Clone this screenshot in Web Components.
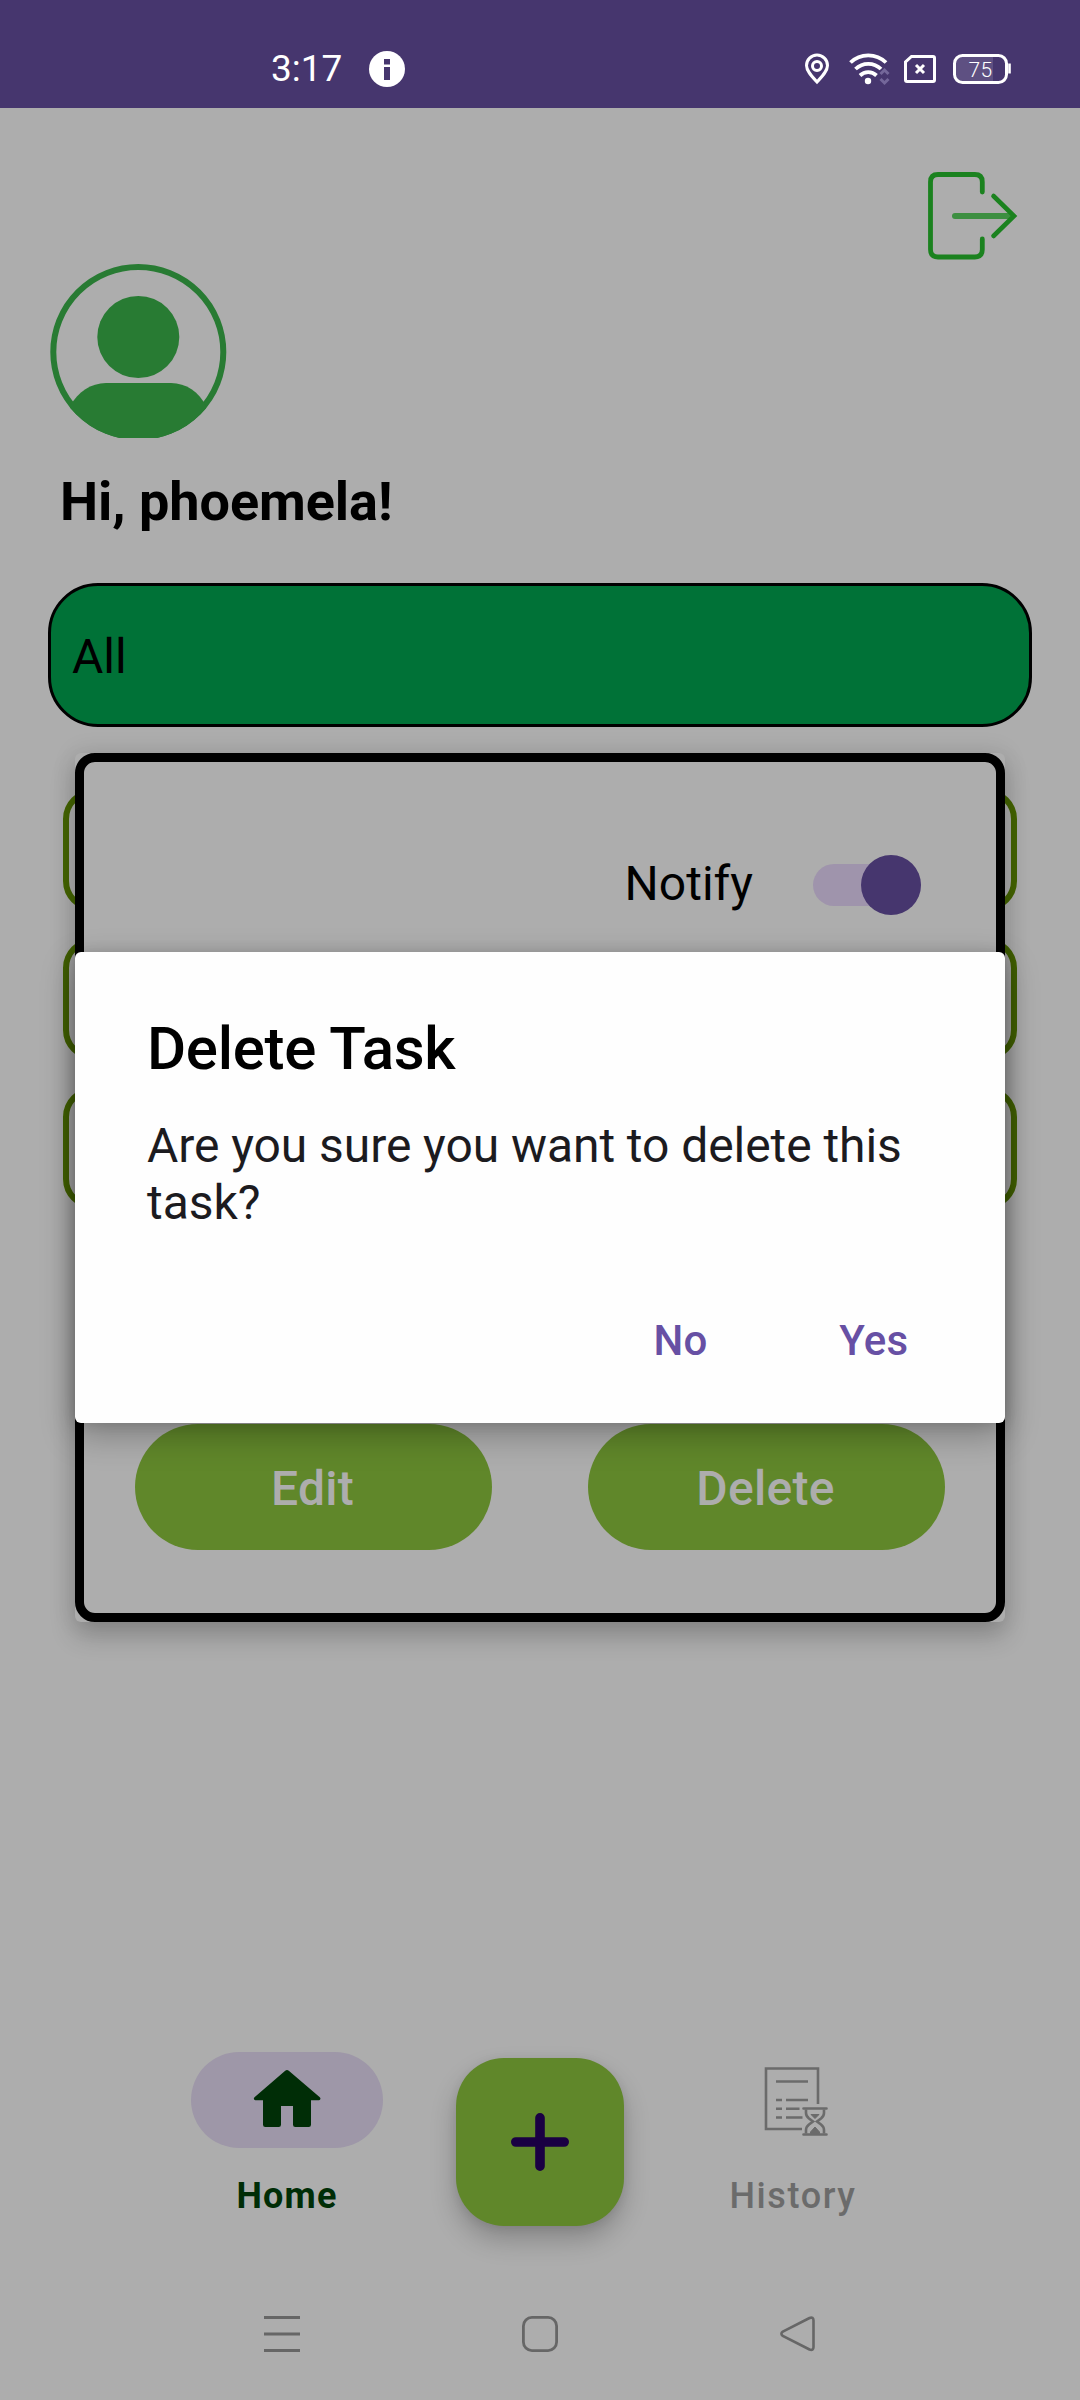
<!DOCTYPE html>
<html lang="en">
<head>
<meta charset="utf-8">
<title>Tasks</title>
<style>
html,body{margin:0;padding:0;background:#adadad}
body{font-family:Roboto,"Noto Sans",sans-serif;color:#000;width:1080px;height:2400px;overflow:hidden}
</style>
</head>
<body>
<app-screen>
  <status-bar slot="status" time="3:17" battery="75"></status-bar>
  <profile-header>Hi, phoemela!</profile-header>
  <filter-select>All</filter-select>
  <task-list><task-item></task-item><task-item></task-item><task-item></task-item></task-list>
  <bottom-nav slot="bottom"></bottom-nav>
  <system-nav slot="bottom"></system-nav>
  <task-card slot="overlay"></task-card>
  <alert-dialog slot="overlay" heading="Delete Task" no="No" yes="Yes">Are you sure you want to delete this task?</alert-dialog>
</app-screen>
<script>
const define = (name, html) => customElements.define(name, class extends HTMLElement {
  constructor() {
    super();
    const a = k => this.getAttribute(k) || '';
    this.attachShadow({mode: 'open'}).innerHTML =
      '<style>:host{display:block;box-sizing:border-box}svg{display:block}*{box-sizing:border-box}</style>' + html(a);
  }
});

define('app-screen', () => `
<style>:host{position:relative;width:1080px;height:2400px;overflow:hidden;background:#adadad;display:flex;flex-direction:column}
main{flex:1;display:flex;flex-direction:column}</style>
<slot name="status"></slot><main><slot></slot></main><slot name="bottom"></slot><slot name="overlay"></slot>`);

define('status-bar', a => `
<style>:host{height:108px;background:#46366e;color:#fff;display:flex;justify-content:space-between;align-items:flex-start;padding:51px 69px 0 271px}
.l,.r{display:flex;align-items:center;height:36px}
.t{font-size:37px;line-height:36px;width:98px;white-space:nowrap}</style>
<div class="l"><span class="t">${a('time')}</span>
<svg width="36" height="36" viewBox="0 0 36 36"><circle cx="18" cy="18" r="18" fill="#fff"/><path d="M15 8h6v5.500h-6zM15 16h6v13h-6z" fill="#46366e"/></svg></div>
<div class="r">
<svg width="206" height="36" viewBox="805 51 206 36" fill="none" stroke="#fff">
<path d="M817 82C812 76.500 806.500 71 806.500 65.500a10.500 10.500 0 0 1 21 0C827.500 71 822 76.500 817 82z" stroke-width="3"/><circle cx="817" cy="66" r="4.500" stroke-width="3"/>
<path d="M850.500 62.500a25.500 25.500 0 0 1 35.500 0M855.500 69a18.200 18.200 0 0 1 25.500 0M860 75.500a12 12 0 0 1 16.500 0" stroke-width="3.800"/>
<circle cx="868" cy="81" r="3.200" fill="#fff" stroke="none"/>
<path d="M880.500 74l4-4 4 4M880.500 79l4 4 4-4" stroke="#74679a" stroke-width="3"/>
<path d="M905.500 62v18q0 1.500 1.500 1.500h26q1.500 0 1.500-1.500V58q0-1.500-1.500-1.500h-21.500z" stroke-width="3"/>
<path d="M916 65l8 8M924 65l-8 8" stroke-width="3"/>
<path d="M961 57h32v24h-32q-5 0-5-5v-14q0-5 5-5z" fill="#5e5082" stroke="none"/>
<rect x="954.500" y="55.500" width="52" height="27" rx="8" stroke-width="3"/>
<path d="M1009.500 63.500v10" stroke-width="2.600"/>
<text x="968.500" y="76.500" font-size="21" font-weight="300" letter-spacing=".3" fill="#fff" stroke="none" font-family="Roboto,sans-serif">${a('battery')}</text>
</svg></div>`);

define('profile-header', () => `
<style>.out{display:flex;justify-content:flex-end;height:156px;padding:61px 62px 0 0}
.av{margin-left:50px}h1{margin:32px 0 0 60px;font-size:54px;line-height:64px;font-weight:700;letter-spacing:-.05px;white-space:nowrap}</style>
<div class="out"><svg width="92" height="92" viewBox="926 169 92 92" fill="none" stroke="#1b821f" stroke-linecap="round">
<path d="M982.300 192V182q0-7.500-7.500-7.500H938q-7.500 0-7.500 7.500v67.500q0 7.500 7.500 7.500h36.800q7.500 0 7.500-7.500V239" stroke-width="4.800"/>
<path d="M955 216h56" stroke="#3d8f41" stroke-width="6"/><path d="M993.500 196l20.500 20-20.500 20" stroke-width="4.600"/></svg></div>
<svg class="av" width="177" height="174" viewBox="0 0 177 174"><defs><clipPath id="c"><circle cx="88.300" cy="88" r="88"/></clipPath></defs>
<circle cx="88.300" cy="88" r="85" fill="none" stroke="#287b33" stroke-width="6"/><circle cx="88.300" cy="73" r="41" fill="#287b33"/>
<path clip-path="url(#c)" fill="#287b33" d="M56 119h65C136 119 149 128 156 142L156 180H20V142C28 128 41 119 56 119z"/></svg>
<h1><slot></slot></h1>`);

define('filter-select', () => `
<style>:host{margin:49px 48px 0;height:144px;border:3px solid #000;border-radius:50px;background:#007237;padding:0 21px;font-size:48px;line-height:142px}</style><slot></slot>`);

define('task-list', () => `
<style>:host{display:flex;flex-direction:column;gap:27px;padding:62px 63px 0}</style><slot></slot>`);
define('task-item', () => `
<style>:host{height:122px;border:6px solid #446400;border-radius:30px}</style>`);

define('task-card', () => `
<style>:host{position:absolute;left:75px;top:753px;width:930px;height:869px;border-radius:6px;background:#adadad;box-shadow:0 14px 26px rgba(0,0,0,.2),0 0 24px rgba(0,0,0,.1)}
.in{height:100%;border:9px solid #000;border-radius:20px;display:flex;flex-direction:column;justify-content:space-between;padding:93px 51px 63px}
.n{display:flex;justify-content:flex-end;align-items:center;gap:60px;padding-right:24px;height:60px;font-size:48px}
.n span{padding-bottom:4px}
.b{display:flex;justify-content:space-between}</style>
<div class="in"><div class="n"><span>Notify</span><toggle-switch></toggle-switch></div>
<div class="b"><pill-button>Edit</pill-button><pill-button>Delete</pill-button></div></div>`);

define('toggle-switch', () => `
<style>:host{width:108px;height:60px;display:flex;align-items:center}
.t{width:108px;height:42px;border-radius:21px;background:#9f94ac;display:flex;align-items:center;justify-content:flex-end}
.k{width:60px;height:60px;flex:none;border-radius:50%;background:#46366e}</style><div class="t"><div class="k"></div></div>`);

define('pill-button', () => `
<style>:host{width:357px;height:126px;padding-top:2px;border-radius:63px;background:#60872a;color:#adadad;font-size:48px;font-weight:500;letter-spacing:.3px;display:flex;align-items:center;justify-content:center}
span{margin-right:2px}</style><span><slot></slot></span>`);

define('alert-dialog', a => `
<style>:host{position:absolute;left:75px;top:952px;width:930px;height:471px;border-radius:6px;background:#fefefe;padding:62px 72px 0;box-shadow:0 12px 34px rgba(0,0,0,.28),0 0 14px rgba(0,0,0,.12)}
h2{margin:0;font-size:60px;line-height:70px;font-weight:500;letter-spacing:-.3px}
p{margin:33px 0 0;font-size:48px;line-height:57px;letter-spacing:-.07px;color:#1c1b1f}
.b{display:flex;justify-content:flex-end;color:#6750a4;font-size:42px;line-height:50px;font-weight:500;letter-spacing:.3px;margin-top:85px;gap:131.500px;padding-right:24.500px}</style>
<h2>${a('heading')}</h2><p><slot></slot></p><div class="b"><span>${a('no')}</span><span>${a('yes')}</span></div>`);

define('nav-item', a => `
<style>:host{display:flex;flex-direction:column;align-items:center;flex:1;font-size:36px;line-height:42px;color:#6b6b6b;font-weight:500;letter-spacing:1.6px}
:host([active]){color:#002d06;font-weight:700;letter-spacing:1.200px}
.p{width:192px;height:96px;border-radius:48px;display:flex;align-items:center;justify-content:center}
:host([active]) .p{background:#9e97a8}
.l{margin-top:27px;white-space:nowrap}</style>
<div class="p"><slot></slot></div><span class="l">${a('label')}</span>`);

define('bottom-nav', () => `
<style>:host{display:flex;height:198px;padding:0 160.500px}
.f{flex:1;display:flex;justify-content:center;padding-top:6px}
.f div{width:168px;height:168px;border-radius:48px;background:#60872a;display:flex;align-items:center;justify-content:center;box-shadow:0 14px 26px rgba(0,0,0,.22),0 2px 10px rgba(0,0,0,.08)}</style>
<nav-item active label="Home"><svg width="72" height="72" viewBox="251 2064 72 72" fill="#002d06"><path d="M285.200 2070.700q1.800-1.500 3.600 0l31 26.500q1 1 .5 2t-1.500 1H311v24.500q0 2.300-2.300 2.300h-13.400q-2.300 0-2.300-2.300V2106h-12v18.700q0 2.300-2.300 2.300h-13.400q-2.300 0-2.300-2.300v-24.500h-7.500q-1 0-1.500-1t.5-2z"/></svg></nav-item>
<div class="f"><div><svg width="60" height="60" viewBox="0 0 60 60" stroke="#1a0043" stroke-width="9.600" stroke-linecap="round"><path d="M30 5.800v48.400M5.800 30h48.400"/></svg></div></div>
<nav-item label="History"><svg width="72" height="72" viewBox="757 2064 72 72" fill="none" stroke="#6b6b6b" stroke-width="2.600">
<path d="M818 2104v-35.500h-52v60.500h36M776 2081.500h32M776 2100h6M786 2100h22M776 2108.700h6M786 2108.700h13.500M776 2117.500h6M786 2117.500h16.500"/>
<path d="M803.500 2108.500h23M803.500 2134.500h23" stroke-linecap="round"/><path d="M806 2109.500v3.500q0 3 3 5.500l4 3-4 3q-3 2.500-3 5.500v3.500M824 2109.500v3.500q0 3-3 5.500l-4 3 4 3q3 2.500 3 5.500v3.500"/>
<path d="M811 2114.500h8l-4 4zM810.500 2133.500v-1.500l4.500-5 4.500 5v1.500z" fill="#6b6b6b" stroke-width="1"/></svg></nav-item>`);

define('system-nav', () => `
<style>:host{display:flex;height:150px;padding:66px 153px 0}div{flex:1;display:flex;justify-content:center}</style>
<div><svg width="36" height="36" viewBox="0 0 36 36" stroke="#666" stroke-width="3"><path d="M0 1.600h36M0 18h36M0 34.400h36"/></svg></div>
<div><svg width="36" height="36" viewBox="0 0 36 36" fill="none" stroke="#666" stroke-width="2.800"><rect x="1.400" y="1.400" width="33.200" height="33.200" rx="8.500"/></svg></div>
<div><svg width="36" height="36" viewBox="0 0 36 36" fill="none" stroke="#666" stroke-width="2.600"><path d="M2.800 15.600L29.500 2Q33.500 .5 33.500 4.500V31Q33.500 35 29.500 33.500L2.800 19.900Q0 17.700 2.800 15.600z"/></svg></div>`);
</script>
</body>
</html>
